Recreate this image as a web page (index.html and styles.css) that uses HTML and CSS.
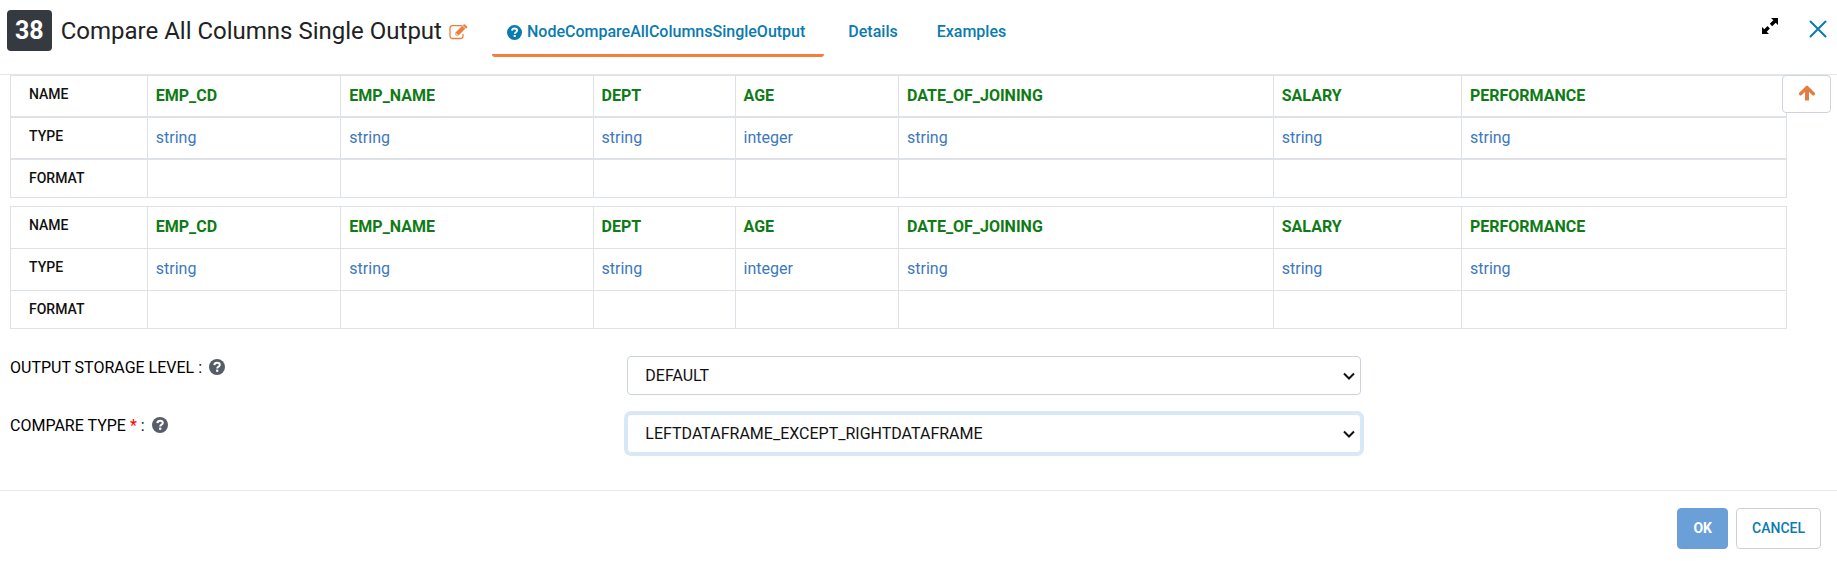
FILE: index.html
```html
<!DOCTYPE html>
<html lang="en">
<head>
<meta charset="utf-8">
<title>Compare All Columns Single Output</title>
<link rel="stylesheet" href="styles.css">
</head>
<body>
<svg class="sprite" aria-hidden="true">
  <symbol id="question" viewBox="0 0 16 16">
    <circle cx="8" cy="8" r="8" fill="currentColor"/>
    <path d="M5.3 6.1C5.5 4.500 6.500 3.700 8.100 3.700C9.700 3.700 10.800 4.600 10.800 5.900C10.800 7.700 8.200 7.600 8.200 9.400" fill="none" stroke="#fff" stroke-width="2"/>
    <rect x="7.100" y="10.600" width="2.200" height="2.200" fill="#fff"/>
  </symbol>
</svg>
<header class="header">
  <span class="badge">38</span>
  <h1 class="title">Compare All Columns Single Output</h1>
  <button class="icon-button edit" type="button" aria-label="Edit name">
    <svg width="19" height="16" viewBox="0 0 19 16" fill="none">
      <path d="M12.500 1.700H3.500A2.500 2.500 0 0 0 1 4.200V12A2.500 2.500 0 0 0 3.500 14.500H11.500A2.500 2.500 0 0 0 14 12V10.500" stroke="currentColor" stroke-width="1.300" stroke-linecap="round"/>
      <path d="M6.500 8.500L14 1L17 4L9.500 11.500H6.500Z" fill="currentColor"/>
      <path d="M14.700.6Q15.500 0 16.300.7L18 2.400Q18.600 3.200 18 3.900L17.400 4.500L14 1.200Z" fill="currentColor"/>
      <path d="M13.400 1.900L16.300 4.800M7.500 9.300V10.500H8.800" stroke="#fff" stroke-width=".6"/>
    </svg>
  </button>
  <nav class="tabs">
    <a class="tab active" href="#node"><svg class="tab-icon"><use href="#question"/></svg>NodeCompareAllColumnsSingleOutput</a>
    <a class="tab" href="#details">Details</a>
    <a class="tab" href="#examples">Examples</a>
  </nav>
  <div class="window-actions">
    <button class="icon-button expand" type="button" aria-label="Expand">
      <svg width="16" height="16" viewBox="0 0 16 16"><path d="M9 0H16V7L13.700 4.700L10.200 8.200L7.800 5.800L11.300 2.300ZM0 9L2.300 11.300L5.500 8.100L7.900 10.500L4.700 13.700L7 16H0Z" fill="currentColor"/><path d="M6.300 6.300L9.700 9.700" stroke="#fff" stroke-width="1.500"/></svg>
    </button>
    <button class="icon-button close" type="button" aria-label="Close">
      <svg width="18" height="18" viewBox="0 0 18 18"><path d="M1.500 1.500L16.500 16.500M16.500 1.500L1.500 16.500" stroke="currentColor" stroke-width="2" stroke-linecap="round"/></svg>
    </button>
  </div>
</header>
<main class="content">
  <button class="scroll-top" type="button" aria-label="Scroll to top">
    <svg width="16" height="16" viewBox="0 0 16 16" fill="none" stroke="currentColor"><path d="M8 15.500V3" stroke-width="4"/><path d="M1.700 8.700L8 2.400L14.300 8.700" stroke-width="3.400" stroke-linecap="round" stroke-linejoin="round"/></svg>
  </button>
  <div class="schemas">
    <table class="schema ruled">
      <colgroup><col class="c-label"><col class="c-code"><col class="c-name"><col class="c-dept"><col class="c-age"><col class="c-date"><col class="c-salary"><col></colgroup>
      <tbody>
      <tr class="names"><th scope="row">NAME</th><td>EMP_CD</td><td>EMP_NAME</td><td>DEPT</td><td>AGE</td><td>DATE_OF_JOINING</td><td>SALARY</td><td>PERFORMANCE</td></tr>
      <tr class="types"><th scope="row">TYPE</th><td>string</td><td>string</td><td>string</td><td>integer</td><td>string</td><td>string</td><td>string</td></tr>
      <tr class="formats"><th scope="row">FORMAT</th><td></td><td></td><td></td><td></td><td></td><td></td><td></td></tr>
      </tbody>
    </table>
    <table class="schema">
      <colgroup><col class="c-label"><col class="c-code"><col class="c-name"><col class="c-dept"><col class="c-age"><col class="c-date"><col class="c-salary"><col></colgroup>
      <tbody>
      <tr class="names"><th scope="row">NAME</th><td>EMP_CD</td><td>EMP_NAME</td><td>DEPT</td><td>AGE</td><td>DATE_OF_JOINING</td><td>SALARY</td><td>PERFORMANCE</td></tr>
      <tr class="types"><th scope="row">TYPE</th><td>string</td><td>string</td><td>string</td><td>integer</td><td>string</td><td>string</td><td>string</td></tr>
      <tr class="formats"><th scope="row">FORMAT</th><td></td><td></td><td></td><td></td><td></td><td></td><td></td></tr>
      </tbody>
    </table>
  </div>
  <form class="form">
    <div class="field">
      <label class="label" for="storage">OUTPUT STORAGE LEVEL : <svg class="help"><use href="#question"/></svg></label>
      <div class="control">
        <select class="select" id="storage"><option>DEFAULT</option></select>
        <svg class="chevron" viewBox="0 0 12 8"><path d="M1 1.500L6 6.500L11 1.500"/></svg>
      </div>
    </div>
    <div class="field">
      <label class="label" for="compare">COMPARE TYPE <span class="required">*</span> : <svg class="help"><use href="#question"/></svg></label>
      <div class="control">
        <select class="select focused" id="compare"><option>LEFTDATAFRAME_EXCEPT_RIGHTDATAFRAME</option></select>
        <svg class="chevron" viewBox="0 0 12 8"><path d="M1 1.500L6 6.500L11 1.500"/></svg>
      </div>
    </div>
  </form>
</main>
<footer class="footer">
  <button class="button primary" type="button">OK</button>
  <button class="button" type="button">CANCEL</button>
</footer>
</body>
</html>
```
FILE: styles.css
```css
* { box-sizing: border-box; }
body { margin: 0; background: #fff; color: #111; font: 16px/24px Roboto, sans-serif; }
button, select { font: inherit; }
.sprite { position: absolute; width: 0; height: 0; }

.header { display: flex; align-items: flex-start; height: 75px; padding: 10px 10px 0 7px; border-bottom: 1px solid #e3e7eb; }
.badge { padding: 0 8px; border-radius: 4px; background: #343a40; color: #fff; font-size: 25px; line-height: 41px; font-weight: 700; }
.title { margin: 0 0 0 9px; font-size: 24px; line-height: 42px; font-weight: 400; color: #222; white-space: nowrap; }
.icon-button { display: flex; padding: 0; border: 0; background: none; cursor: pointer; }
.edit { margin: 14px 0 0 7px; color: #ea8040; }
.tabs { display: flex; margin-left: 24px; }
.tab { display: flex; align-items: center; height: 47px; padding: 0 15px; border-bottom: 3px solid transparent; border-radius: 3px; color: #0a7bb0; font-weight: 500; text-decoration: none; }
.tab.active { padding-right: 19px; border-color: #f47c3c; }
.tab + .tab { margin-left: 9px; }
.tab-icon { width: 15px; height: 15px; margin-right: 5px; }
.window-actions { display: flex; margin-left: auto; gap: 31px; }
.expand { margin-top: 8px; color: #000; }
.close { margin-top: 10px; color: #0a7bb0; }

.content { position: relative; }
.scroll-top { position: absolute; top: 0; right: 6px; display: flex; justify-content: center; padding: 9px 0; width: 49px; height: 38px; border: 1px solid #ced4de; border-radius: 4px; background: #fff; color: #e27e41; }
.schemas { display: grid; gap: 8px; padding: 0 50px 0 10px; }
.schema { width: 100%; border-collapse: collapse; table-layout: fixed; }
.schema th, .schema td { padding: 8px; border: 1px solid #dee2e6; text-align: left; vertical-align: top; }
.schema tr { height: 42px; }
.schema .formats { height: 38px; }
.schema th { padding: 6px 18px; font-size: 14px; font-weight: 500; }
.ruled tr + tr th, .ruled tr + tr td { border-top-width: 2px; }
.ruled .names { height: 41px; }
.names td { color: #0f7b16; font-weight: 700; }
.types td { color: #3c78bd; }
.c-label { width: 7.7%; }
.c-code { width: 10.9%; }
.c-name { width: 14.2%; }
.c-dept { width: 8%; }
.c-age { width: 9.2%; }
.c-date { width: 21.1%; }
.c-salary { width: 10.6%; }

.form { display: grid; gap: 19px; padding: 27px 0 37px; }
.field { display: grid; grid-template-columns: 4fr 5fr 3fr; }
.label { padding-left: 10px; color: #000; }
.required { color: #f00; }
.help { width: 16px; height: 16px; margin-left: 3px; vertical-align: -2px; color: #555e68; }
.control { position: relative; margin: 0 17px 0 15px; }
.select { display: block; width: 100%; height: 39px; padding: 1px 17px 0; border: 1px solid #ccd2e0; border-radius: 4px; background: #fff; color: #111; appearance: none; outline: 0; }
.select.focused { border-color: #d9e8f7; box-shadow: 0 0 0 3px #d9e8f7; }
.chevron { position: absolute; top: 16px; right: 6px; width: 12px; height: 8px; fill: none; stroke: #111; stroke-width: 2; pointer-events: none; }

.footer { display: flex; justify-content: flex-end; gap: 8px; padding: 17px 16px; border-top: 1px solid #e6eaee; }
.button { height: 41px; padding: 0 15px; border: 1px solid #ccd2dc; border-radius: 4px; background: #fff; color: #0a7bb0; font-size: 14px; font-weight: 500; }
.button.primary { border-color: #6a9fd8; background: #6a9fd8; color: #fff; font-weight: 700; }
```
